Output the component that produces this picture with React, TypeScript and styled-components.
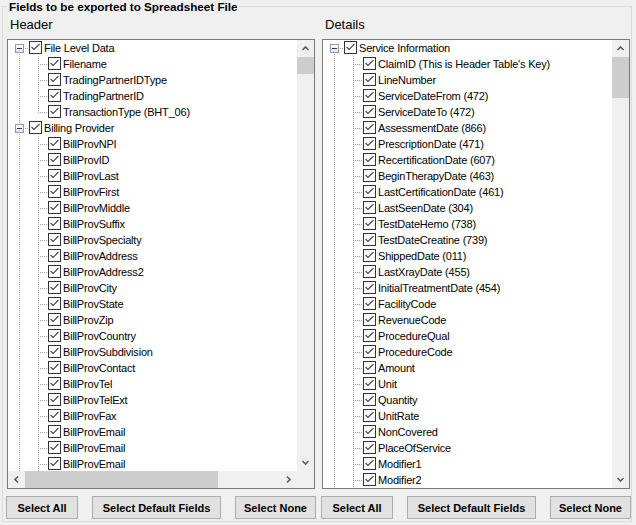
import { Fragment } from 'react';
import styled, { createGlobalStyle } from 'styled-components';

type TreeGroup = { title: string; items: string[]; continues?: boolean };
type LineKind = 'none' | 'full' | 'top' | 'bottom';
type Direction = 'up' | 'down' | 'left' | 'right';

const headerGroups: TreeGroup[] = [
  {
    title: 'File Level Data',
    items: ['Filename', 'TradingPartnerIDType', 'TradingPartnerID', 'TransactionType (BHT_06)'],
  },
  {
    title: 'Billing Provider',
    continues: true,
    items: [
      'BillProvNPI',
      'BillProvID',
      'BillProvLast',
      'BillProvFirst',
      'BillProvMiddle',
      'BillProvSuffix',
      'BillProvSpecialty',
      'BillProvAddress',
      'BillProvAddress2',
      'BillProvCity',
      'BillProvState',
      'BillProvZip',
      'BillProvCountry',
      'BillProvSubdivision',
      'BillProvContact',
      'BillProvTel',
      'BillProvTelExt',
      'BillProvFax',
      'BillProvEmail',
      'BillProvEmail',
      'BillProvEmail',
    ],
  },
];

const detailGroups: TreeGroup[] = [
  {
    title: 'Service Information',
    continues: true,
    items: [
      "ClaimID (This is Header Table's Key)",
      'LineNumber',
      'ServiceDateFrom (472)',
      'ServiceDateTo (472)',
      'AssessmentDate (866)',
      'PrescriptionDate (471)',
      'RecertificationDate (607)',
      'BeginTherapyDate (463)',
      'LastCertificationDate (461)',
      'LastSeenDate (304)',
      'TestDateHemo (738)',
      'TestDateCreatine (739)',
      'ShippedDate (011)',
      'LastXrayDate (455)',
      'InitialTreatmentDate (454)',
      'FacilityCode',
      'RevenueCode',
      'ProcedureQual',
      'ProcedureCode',
      'Amount',
      'Unit',
      'Quantity',
      'UnitRate',
      'NonCovered',
      'PlaceOfService',
      'Modifier1',
      'Modifier2',
    ],
  },
];

const dots = (dir: 'bottom' | 'right') =>
  `repeating-linear-gradient(to ${dir}, #a0a0a0 0 1px, transparent 1px 2px)`;

const chevrons: Record<Direction, string> = {
  up: 'M1.5 6 L4.5 3 L7.5 6',
  down: 'M1.5 3 L4.5 6 L7.5 3',
  left: 'M6 1.5 L3 4.5 L6 7.5',
  right: 'M3 1.5 L6 4.5 L3 7.5',
};

const Chevron = ({ dir }: { dir: Direction }) => (
  <svg width="9" height="9" viewBox="0 0 9 9">
    <path d={chevrons[dir]} fill="none" stroke="#606060" strokeWidth="1.7" />
  </svg>
);

const CheckMark = () => (
  <svg width="11" height="11" viewBox="0 0 11 11">
    <path d="M1.5 5 L4 7.5 L9.5 2" fill="none" stroke="#444" strokeWidth="1.1" />
  </svg>
);

const Tree = ({ groups, moreRoots }: { groups: TreeGroup[]; moreRoots?: boolean }) => (
  <TreeContent>
    {groups.map((group, gi) => {
      const hasNext = gi < groups.length - 1 || !!moreRoots;
      let rootLine: LineKind = 'none';
      if (gi > 0) rootLine = hasNext ? 'full' : 'top';
      else if (hasNext) rootLine = 'bottom';
      return (
        <Fragment key={group.title}>
          <Row>
            <Guide $line={rootLine} $branch>
              <Expander />
            </Guide>
            <CheckBox>
              <CheckMark />
            </CheckBox>
            <NodeText>{group.title}</NodeText>
          </Row>
          {group.items.map((item, ii) => {
            const last = ii === group.items.length - 1 && !group.continues;
            return (
              <Row key={ii}>
                <Guide $line={hasNext ? 'full' : 'none'} />
                <Guide $line={last ? 'top' : 'full'} $branch />
                <CheckBox>
                  <CheckMark />
                </CheckBox>
                <NodeText>{item}</NodeText>
              </Row>
            );
          })}
        </Fragment>
      );
    })}
  </TreeContent>
);

const VerticalScroll = ({ thumb }: { thumb: number }) => (
  <VScroll>
    <ScrollArrow>
      <Chevron dir="up" />
    </ScrollArrow>
    <VTrack>
      <VThumb $size={thumb} />
    </VTrack>
    <ScrollArrow>
      <Chevron dir="down" />
    </ScrollArrow>
  </VScroll>
);

const Buttons = () => (
  <ButtonRow>
    <Button $w={72}>Select All</Button>
    <Button $w={129}>Select Default Fields</Button>
    <Button $w={81}>Select None</Button>
  </ButtonRow>
);

export default function App() {
  return (
    <>
      <GlobalStyle />
      <Group>
        <Legend>Fields to be exported to Spreadsheet File</Legend>
        <Column>
          <ColumnTitle>Header</ColumnTitle>
          <TreeBox $hScroll>
            <Tree groups={headerGroups} moreRoots />
            <VerticalScroll thumb={17} />
            <HScroll>
              <ScrollArrow>
                <Chevron dir="left" />
              </ScrollArrow>
              <HTrack>
                <HThumb $size={193} />
              </HTrack>
              <ScrollArrow>
                <Chevron dir="right" />
              </ScrollArrow>
            </HScroll>
            <Corner />
          </TreeBox>
          <Buttons />
        </Column>
        <Column>
          <ColumnTitle>Details</ColumnTitle>
          <TreeBox>
            <Tree groups={detailGroups} moreRoots />
            <VerticalScroll thumb={41} />
          </TreeBox>
          <Buttons />
        </Column>
      </Group>
    </>
  );
}

const GlobalStyle = createGlobalStyle`
  html, body {
    margin: 0;
    padding: 0;
  }
  body {
    background: #f0f0f0;
    font-family: 'Liberation Sans', Arial, sans-serif;
    color: #000;
  }
`;

const Group = styled.fieldset`
  box-sizing: border-box;
  display: flex;
  gap: 7px;
  width: 630px;
  height: 522px;
  min-width: 0;
  margin: 0 0 0 2px;
  padding: 4px 1px 2px 4px;
  border: 1px solid #dcdcdc;
`;

const Legend = styled.legend`
  padding: 0 2px;
  font: bold 11.7px/13px 'Liberation Sans', Arial, sans-serif;
  color: #000;
`;

const Column = styled.div`
  display: flex;
  flex-direction: column;
  width: 308px;
`;

const ColumnTitle = styled.div`
  margin: 0 0 7px 3px;
  font-size: 13px;
  line-height: 15px;
`;

const TreeBox = styled.div<{ $hScroll?: boolean }>`
  box-sizing: border-box;
  display: grid;
  grid-template-columns: minmax(0, 1fr) 17px;
  grid-template-rows: ${({ $hScroll }) => ($hScroll ? 'minmax(0, 1fr) 17px' : 'minmax(0, 1fr)')};
  height: 450px;
  border: 1px solid #7a7a7a;
  background: #fff;
`;

const TreeContent = styled.div`
  overflow: hidden;
  padding-left: 2px;
`;

const Row = styled.div`
  display: flex;
  align-items: flex-start;
  height: 16px;
  white-space: nowrap;
`;

const Guide = styled.span<{ $line: LineKind; $branch?: boolean }>`
  position: relative;
  box-sizing: border-box;
  display: flex;
  flex: 0 0 19px;
  height: 16px;
  padding: 4px 0 0 5px;

  &::before {
    content: '';
    display: ${({ $line }) => ($line === 'none' ? 'none' : 'block')};
    position: absolute;
    left: 9px;
    width: 1px;
    top: ${({ $line }) => ($line === 'bottom' ? '8px' : '0')};
    bottom: ${({ $line }) => ($line === 'top' ? '7px' : '0')};
    background: ${dots('bottom')};
  }

  &::after {
    content: '';
    display: ${({ $branch }) => ($branch ? 'block' : 'none')};
    position: absolute;
    left: 11px;
    right: 0;
    top: 8px;
    height: 1px;
    background: ${dots('right')};
  }
`;

const Expander = styled.span`
  position: relative;
  z-index: 1;
  box-sizing: border-box;
  display: flex;
  align-items: center;
  justify-content: center;
  width: 9px;
  height: 9px;
  border: 1px solid #8b9cb3;
  background: linear-gradient(#ffffff, #dde3ea);

  &::before {
    content: '';
    width: 5px;
    height: 1px;
    background: #1f3d6f;
  }
`;

const CheckBox = styled.span`
  box-sizing: border-box;
  display: flex;
  flex: 0 0 13px;
  height: 13px;
  margin-top: 1px;
  border: 1px solid #333;
  background: #fff;
`;

const NodeText = styled.span`
  margin-left: 2px;
  font-size: 11px;
  line-height: 16px;
  letter-spacing: -0.2px;
`;

const VScroll = styled.div`
  display: flex;
  flex-direction: column;
  min-height: 0;
  background: #f0f0f0;
`;

const HScroll = styled.div`
  display: flex;
  background: #f0f0f0;
`;

const ScrollArrow = styled.div`
  display: flex;
  align-items: center;
  justify-content: center;
  flex: 0 0 17px;
  width: 17px;
  height: 17px;
`;

const VTrack = styled.div`
  flex: 1;
`;

const VThumb = styled.div<{ $size: number }>`
  height: ${({ $size }) => $size}px;
  background: #cdcdcd;
`;

const HTrack = styled.div`
  display: flex;
  flex: 1;
`;

const HThumb = styled.div<{ $size: number }>`
  width: ${({ $size }) => $size}px;
  background: #cdcdcd;
`;

const Corner = styled.div`
  background: #f0f0f0;
`;

const ButtonRow = styled.div`
  display: flex;
  justify-content: space-between;
  margin: 7px -1px 0;
`;

const Button = styled.button<{ $w: number }>`
  box-sizing: border-box;
  width: ${({ $w }) => $w}px;
  height: 23px;
  padding: 0;
  border: 1px solid #adadad;
  background: #e1e1e1;
  font: bold 11px 'Liberation Sans', Arial, sans-serif;
  color: #000;
`;
